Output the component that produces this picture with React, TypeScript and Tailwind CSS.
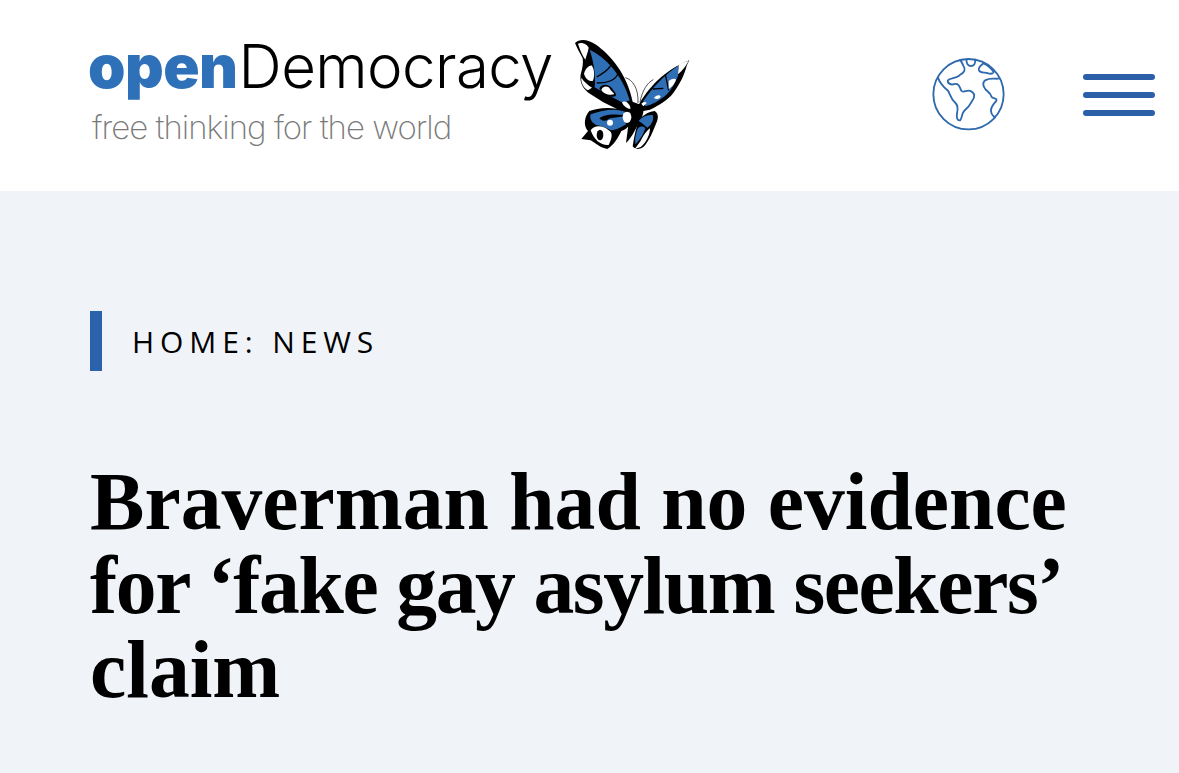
function Butterfly() {
  const blue = "#2f6fb5";
  return (
    <svg viewBox="30 15 360 345" className="w-[120px] h-[115px] shrink-0 self-start mt-[36px] ml-[9px]">
      {/* left fore wing */}
      <path fill="#000" d="M45 36C58 22 84 24 106 40C152 72 200 128 218 212L242 222L200 248L130 214L92 190C70 176 58 156 62 130C68 112 70 95 68 82C60 66 50 50 45 36Z" />
      <path fill={blue} d="M89 56C132 76 188 130 209 208L190 216L104 172C108 130 100 90 89 56Z" />
      <path fill="none" stroke="#000" strokeWidth="4" d="M152 104C144 118 128 128 110 138M174 128C166 146 146 156 110 156" />
      <path fill="none" stroke="#000" strokeWidth="5" d="M104 172L190 222" />
      <path fill="#000" d="M118 172C124 158 146 158 156 172C164 184 172 190 166 196C148 200 126 190 118 172Z" />
      <path fill="#fff" d="M54 38C66 32 82 40 86 50C84 64 78 76 76 86C66 72 58 52 54 38Z" />
      <path fill="#fff" d="M72 128C76 114 86 102 96 104C104 116 104 140 98 150C86 152 76 142 72 128Z" />
      <path fill="#fff" d="M64 140C72 152 84 162 96 170L84 178C72 172 62 156 64 140Z" />
      <path fill="#fff" d="M124 176C130 164 144 164 150 174C156 184 164 186 162 190C146 194 130 188 124 176Z" />
      <path fill="#fff" d="M186 214C196 206 210 218 212 234C202 234 190 226 186 214Z" />
      {/* right fore wing */}
      <path fill="#000" d="M236 222C262 176 310 118 388 88L380 104C374 130 360 158 340 186C322 208 300 222 270 236L238 242Z" />
      <path fill={blue} d="M250 210C272 176 310 134 354 104L354 134C346 156 332 180 314 196C296 210 276 222 256 226Z" />
      <path fill="none" stroke="#000" strokeWidth="4" d="M316 130L326 178M278 174L310 172" />
      <path fill="#fff" d="M356 102C366 96 376 92 386 90C378 104 368 118 354 130Z" />
      <path fill="#fff" d="M326 150C336 142 346 142 348 146C344 158 336 168 326 174Z" />
      <path fill="#fff" d="M282 200C288 192 298 190 302 196C300 204 290 208 282 200Z" />
      <path fill="#fff" d="M244 218C250 212 256 212 260 216L250 226Z" />
      {/* antennae */}
      <path fill="none" stroke="#333" strokeWidth="2.5" d="M196 140C218 146 236 172 234 216" />
      <path fill="none" stroke="#333" strokeWidth="2.5" d="M280 146C262 154 246 180 240 214" />
      {/* left hind wing */}
      <path fill="#000" d="M88 240C110 232 150 224 202 240L214 258C214 280 200 296 184 300C176 318 160 344 142 354C120 350 108 338 92 328L64 324L84 300C70 286 72 258 88 240Z" />
      <path fill={blue} d="M92 250C130 236 170 230 200 244L192 252C160 248 130 250 118 262C128 272 136 272 150 262L194 256L198 280C182 290 168 298 152 298C140 290 124 284 108 282C94 274 88 262 92 250Z" />
      <path fill="#fff" d="M92 298C104 280 130 284 146 298C160 306 156 322 146 342C124 344 102 328 92 298Z" />
      <ellipse cx="120" cy="312" rx="10" ry="16" fill="#000" />
      <ellipse cx="150" cy="275" rx="9" ry="9" fill="#fff" />
      {/* body */}
      <path fill="#000" d="M216 224C226 214 244 218 250 230C252 246 246 262 238 268C232 288 214 322 198 336L204 290C204 266 206 240 216 224Z" />
      <ellipse cx="201" cy="259" rx="13" ry="17" fill="#fff" />
      {/* right hind wing */}
      <path fill="#000" d="M236 268C244 258 262 242 284 240C296 248 296 262 288 278C280 298 268 330 250 348C238 356 226 356 218 346C222 320 228 290 236 268Z" />
      <path fill={blue} d="M236 270C246 256 262 250 278 252C284 268 272 284 262 290C252 282 246 276 236 270Z" />
      <path fill={blue} d="M234 292C240 286 250 284 256 292C250 312 238 328 226 340C224 320 228 306 234 292Z" />
      <path fill="#fff" d="M246 322C252 310 262 298 270 292C270 312 258 336 242 348L224 354C232 344 240 334 246 322Z" />
    </svg>
  );
}

function Globe() {
  return (
    <svg viewBox="38 26 218 218" className="w-[73px] h-[73px] shrink-0" fill="none" stroke="#2f69ad" strokeWidth="5.5" strokeLinejoin="round" strokeLinecap="round">
      <circle cx="147" cy="134" r="105" />
      <path d="M56 84C60 100 72 112 86 124C92 134 94 148 106 158C116 166 116 176 113 190C110 204 114 214 122 212C128 206 126 194 134 184C144 176 150 170 158 154C166 144 168 130 152 124C140 120 134 132 126 124C120 112 118 100 104 104C94 108 82 100 86 92C96 84 112 88 122 76C134 70 140 60 132 50C128 40 126 36 122 32" />
      <path d="M141 30C140 42 146 50 154 50C164 50 168 42 167 31" />
      <path d="M192 42C184 48 176 54 178 62C182 72 196 68 206 72C214 74 220 72 222 68C216 58 206 48 192 42Z" />
      <path d="M240 87C228 90 212 84 198 92C186 100 192 112 198 120C206 128 212 130 216 142C222 148 234 146 230 154C222 164 214 170 214 184C214 194 220 198 226 204" />
    </svg>
  );
}

export default function App() {
  return (
    <div className="w-[1179px] h-[773px] bg-[#f0f4f9] overflow-hidden">
      <header className="h-[191px] bg-white flex items-center pl-[90px] pr-[24px]">
        <div className="w-[471px] shrink-0 self-start mt-[33px] font-['Inter',sans-serif]">
          <div className="flex items-baseline text-[60px] leading-[66px] whitespace-nowrap -ml-[2px]">
            <span className="font-black tracking-[-0.5px] text-[#2e71b8]">open</span>
            <span className="ml-[1px] font-light tracking-[-0.6px] text-black">Democracy</span>
          </div>
          <div className="ml-[2px] mt-[8px] text-[33px] leading-[40px] font-extralight tracking-[-1px] text-[#7a7a7a] whitespace-nowrap">free thinking for the world</div>
        </div>
        <Butterfly />
        <div className="ml-auto flex items-center gap-[78px] pb-[2px]">
          <Globe />
          <div className="flex flex-col gap-[12px] w-[72px]">
            <div className="h-[6px] rounded-full bg-[#2b5fa8]" />
            <div className="h-[6px] rounded-full bg-[#2b5fa8]" />
            <div className="h-[6px] rounded-full bg-[#2b5fa8]" />
          </div>
        </div>
      </header>
      <main className="pl-[90px] pt-[120px]">
        <div className="flex items-center h-[60px] border-l-[12px] border-[#2b62ad] pl-[30px] text-[30px] tracking-[5.9px] font-['Open_Sans',sans-serif] text-black">HOME: NEWS</div>
        <h1 className="mt-[89px] text-[81.6px] leading-[84px] font-bold text-black font-['Liberation_Serif',serif] whitespace-nowrap">
          <span className="block">Braverman had no evidence</span>
          <span className="block tracking-[-1.4px]">for ‘fake gay asylum seekers’</span>
          <span className="block">claim</span>
        </h1>
      </main>
    </div>
  );
}
